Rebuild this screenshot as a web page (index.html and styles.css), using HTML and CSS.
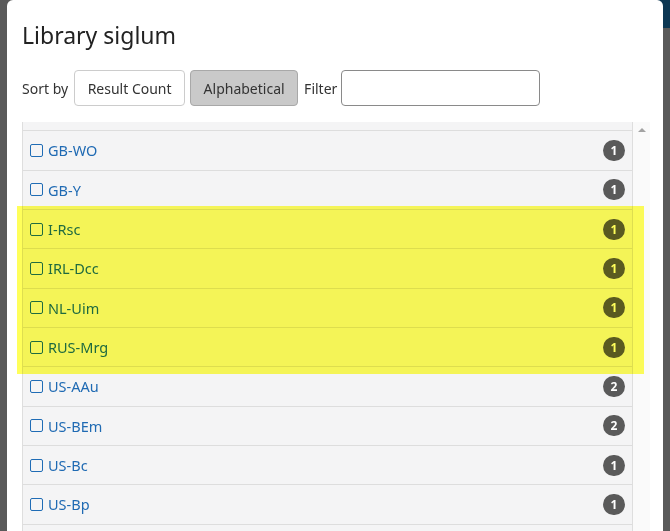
FILE: index.html
```html
<!DOCTYPE html>
<html lang="en">
<head>
<meta charset="utf-8">
<title>Library siglum</title>
<link rel="stylesheet" href="styles.css">
</head>
<body>
<div class="page-accent"></div>
<div class="modal">
  <h1 class="modal-title">Library siglum</h1>
  <div class="toolbar">
    <span class="label label-sort">Sort by</span>
    <button class="btn btn-count" type="button">Result Count</button>
    <button class="btn btn-alpha active" type="button">Alphabetical</button>
    <span class="label label-filter">Filter</span>
    <input class="filter" type="text">
  </div>
  <div class="list-wrap">
    <ul class="facet-list" id="facets">
      <li class="facet"><span class="check"></span><a class="facet-name">GB-T</a><span class="badge">1</span></li>
      <li class="facet"><span class="check"></span><a class="facet-name">GB-WO</a><span class="badge">1</span></li>
      <li class="facet"><span class="check"></span><a class="facet-name">GB-Y</a><span class="badge">1</span></li>
      <li class="facet"><span class="check"></span><a class="facet-name">I-Rsc</a><span class="badge">1</span></li>
      <li class="facet"><span class="check"></span><a class="facet-name">IRL-Dcc</a><span class="badge">1</span></li>
      <li class="facet"><span class="check"></span><a class="facet-name">NL-Uim</a><span class="badge">1</span></li>
      <li class="facet"><span class="check"></span><a class="facet-name">RUS-Mrg</a><span class="badge">1</span></li>
      <li class="facet"><span class="check"></span><a class="facet-name">US-AAu</a><span class="badge">2</span></li>
      <li class="facet"><span class="check"></span><a class="facet-name">US-BEm</a><span class="badge">2</span></li>
      <li class="facet"><span class="check"></span><a class="facet-name">US-Bc</a><span class="badge">1</span></li>
      <li class="facet"><span class="check"></span><a class="facet-name">US-Bp</a><span class="badge">1</span></li>
      <li class="facet"><span class="check"></span><a class="facet-name">US-CA</a><span class="badge">1</span></li>
    </ul>
    <div class="scrollbar"><span class="arrow-up"></span></div>
    <div class="highlight"></div>
  </div>
</div>
<script src="script.js"></script>
</body>
</html>
```

FILE: styles.css
```css
html, body {
  margin: 0;
  padding: 0;
  height: 100%;
}
body {
  background: #5a5a5a;
  font-family: "Noto Sans", "Open Sans", sans-serif;
  overflow: hidden;
  position: relative;
}
.page-accent {
  position: absolute;
  right: 0;
  top: 0;
  width: 12px;
  height: 28px;
  background: #0c3753;
}
.modal {
  position: relative;
  margin-left: 7px;
  width: 656px;
  height: 100vh;
  box-sizing: border-box;
  background: #ffffff;
  border-radius: 6px 6px 0 0;
  padding: 20px 13px 0 15px;
}
.modal-title {
  margin: 0;
  font-size: 23px;
  line-height: 30px;
  font-weight: 400;
  color: #222222;
}
.toolbar {
  margin-top: 20px;
  display: flex;
  align-items: center;
  height: 36px;
}
.label {
  font-size: 14px;
  color: #333333;
  margin-right: 4px;
  white-space: nowrap;
}
.label-sort {
  margin-right: 6px;
}
.label-filter {
  margin-left: 6px;
}
.btn {
  height: 36px;
  box-sizing: border-box;
  border: 1px solid #cccccc;
  border-radius: 4px;
  background: #ffffff;
  color: #333333;
  font-family: inherit;
  font-size: 14px;
  padding: 0;
  white-space: nowrap;
  text-align: center;
}
.btn-count {
  width: 111px;
}
.btn-alpha {
  width: 108px;
  margin-left: 5px;
}
.btn.active {
  background: #c9c9c9;
  border-color: #a8a8a8;
}
.filter {
  width: 199px;
  height: 36px;
  box-sizing: border-box;
  border: 1px solid #8a8a8a;
  border-radius: 4px;
  padding: 0 8px;
  font-family: inherit;
  font-size: 14px;
}
.list-wrap {
  position: relative;
  margin-top: 16px;
  display: flex;
  height: 409px;
}
.facet-list {
  list-style: none;
  margin: 0;
  padding: 0;
  width: 611px;
  box-sizing: border-box;
  border-left: 1px solid #dedede;
  border-right: 1px solid #dedede;
  overflow: hidden;
}
.facet {
  display: flex;
  align-items: center;
  height: 39.33px;
  box-sizing: border-box;
  padding: 0 7px;
  background: #f4f4f5;
  border-bottom: 1px solid #dddddd;
}
.check {
  width: 13px;
  height: 13px;
  box-sizing: border-box;
  border: 1.7px solid #1f6cb5;
  border-radius: 2px;
  margin-right: 5px;
  flex: none;
}
.facet-name {
  color: #1f6ab3;
  font-size: 14.5px;
  line-height: 22px;
  flex: 1;
}
.badge {
  width: 22px;
  height: 21px;
  border-radius: 11px;
  background: #5a5a5a;
  color: #ffffff;
  font-size: 12px;
  font-weight: 700;
  display: flex;
  align-items: center;
  justify-content: center;
}
.scrollbar {
  width: 17px;
  background: #fafafa;
  display: flex;
  justify-content: center;
  padding-top: 6px;
  box-sizing: border-box;
}
.arrow-up {
  width: 0;
  height: 0;
  border-left: 4px solid transparent;
  border-right: 4px solid transparent;
  border-bottom: 4px solid #a3a3a3;
}
.highlight {
  position: absolute;
  left: -5px;
  top: 84px;
  width: 627px;
  height: 168px;
  background: #ffff5a;
  mix-blend-mode: multiply;
  pointer-events: none;
}
```

FILE: script.js
```js
document.getElementById('facets').scrollTop = 30;
```
